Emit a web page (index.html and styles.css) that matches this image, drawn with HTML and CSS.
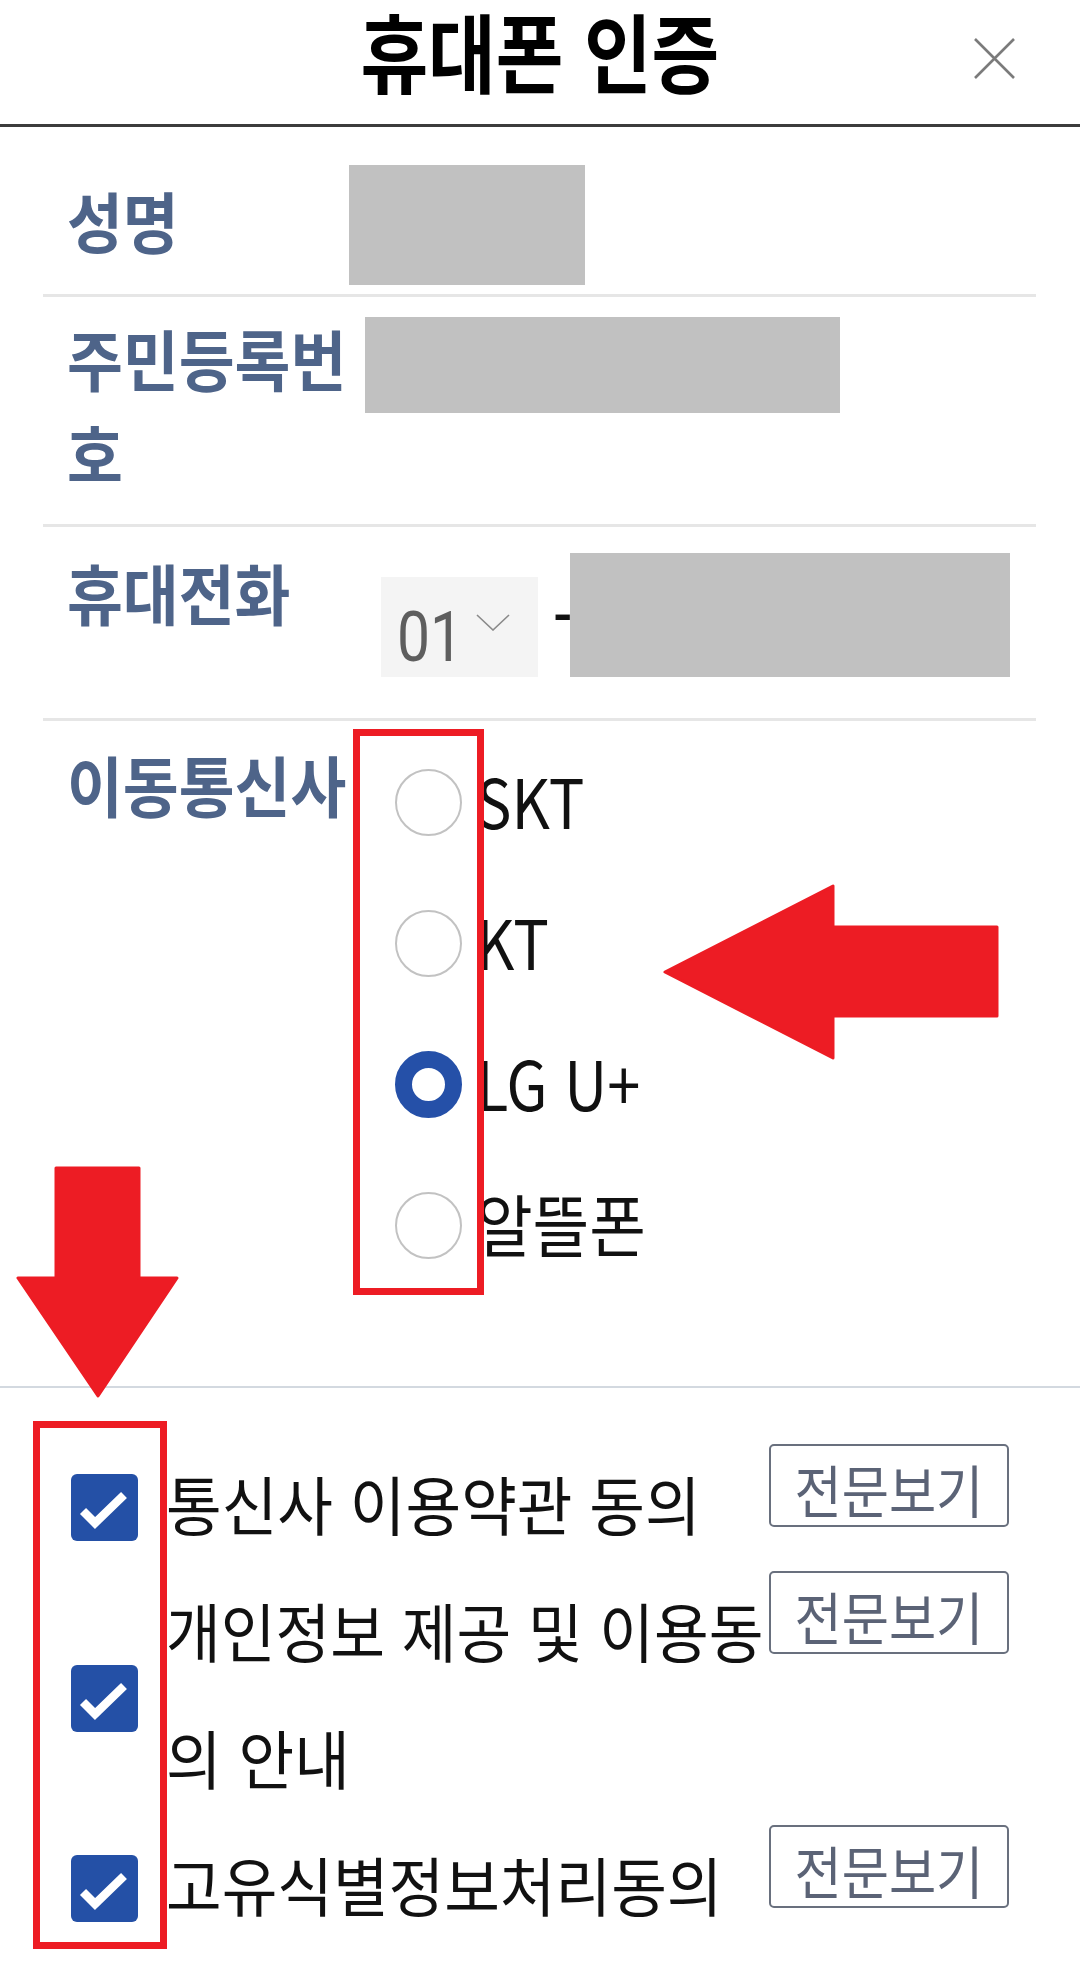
FILE: index.html
```html
<!DOCTYPE html>
<html lang="ko">
<head>
<meta charset="utf-8">
<title>휴대폰 인증</title>
<link rel="stylesheet" href="styles.css">
</head>
<body>
<div class="page">
  <header class="hdr">
    <h1 class="title"><span class="sx sx-title">휴대폰 인증</span></h1>
    <button class="close" aria-label="닫기">
      <svg viewBox="0 0 43 43" width="43" height="43"><path d="M2 2L41 41M41 2L2 41" stroke="#7b7b7b" stroke-width="2.6" fill="none"/></svg>
    </button>
  </header>

  <main class="form">
    <div class="row row-name">
      <div class="label"><span class="sx">성명</span></div>
      <div class="mask mask-name"></div>
    </div>
    <div class="row row-rrn">
      <div class="label"><span class="sx">주민등록번<br>호</span></div>
      <div class="mask mask-rrn"></div>
    </div>
    <div class="row row-phone">
      <div class="label"><span class="sx">휴대전화</span></div>
      <div class="select">
        <span class="sel-val sx sx-num">01</span>
        <svg class="chev" viewBox="0 0 34 17" width="34" height="17"><polyline points="1,1 17,16 33,1" fill="none" stroke="#8a8a8a" stroke-width="1.6"/></svg>
      </div>
      <span class="dash">-</span>
      <div class="mask mask-phone"></div>
    </div>
    <div class="row row-carrier">
      <div class="label"><span class="sx">이동통신사</span></div>
      <ul class="radios">
        <li class="radio"><span class="dot"></span><span class="rtxt sx sx-lat">SKT</span></li>
        <li class="radio"><span class="dot"></span><span class="rtxt sx sx-lat">KT</span></li>
        <li class="radio"><span class="dot dot-on"></span><span class="rtxt sx sx-lat">LG U+</span></li>
        <li class="radio"><span class="dot"></span><span class="rtxt sx sx-ko">알뜰폰</span></li>
      </ul>
    </div>
  </main>

  <section class="agree">
    <div class="item">
      <span class="cb"><svg viewBox="0 0 67 67" width="67" height="67"><polyline points="12,37 24,49 53,21" fill="none" stroke="#fff" stroke-width="8.5"/></svg></span>
      <div class="itxt"><span class="sx sx-item">통신사 이용약관 동의</span></div>
      <button class="view"><span class="sx sx-btn">전문보기</span></button>
    </div>
    <div class="item">
      <span class="cb"><svg viewBox="0 0 67 67" width="67" height="67"><polyline points="12,37 24,49 53,21" fill="none" stroke="#fff" stroke-width="8.5"/></svg></span>
      <div class="itxt"><span class="sx sx-item2">개인정보 제공 및 이용동</span><br><span class="sx sx-item">의 안내</span></div>
      <button class="view"><span class="sx sx-btn">전문보기</span></button>
    </div>
    <div class="item">
      <span class="cb"><svg viewBox="0 0 67 67" width="67" height="67"><polyline points="12,37 24,49 53,21" fill="none" stroke="#fff" stroke-width="8.5"/></svg></span>
      <div class="itxt"><span class="sx sx-item">고유식별정보처리동의</span></div>
      <button class="view"><span class="sx sx-btn">전문보기</span></button>
    </div>
  </section>
</div>

<div class="mark mark-radios"></div>
<div class="mark mark-checks"></div>
<svg class="arrow arrow-left" viewBox="0 0 340 185" width="340" height="185"><polygon points="5,92 173,6 173,47 337,47 337,136 173,136 173,178" fill="#ed1c24" stroke="#ed1c24" stroke-width="3" stroke-linejoin="round"/></svg>
<svg class="arrow arrow-down" viewBox="0 0 168 236" width="168" height="236"><polygon points="42,4 125,4 125,114 163,114 84,232 4,114 42,114" fill="#ed1c24" stroke="#ed1c24" stroke-width="3" stroke-linejoin="round"/></svg>
</body>
</html>
```

FILE: styles.css
```css
* { box-sizing: border-box; margin: 0; padding: 0; }
html, body { width: 1080px; height: 1966px; }
body {
  position: relative;
  overflow: hidden;
  background: #fff;
  color: #111;
  font-family: "Noto Sans CJK KR", "Noto Sans", sans-serif;
}

.sx {
  display: inline-block;
  white-space: nowrap;
  transform: scaleX(.92);
  transform-origin: 0 50%;
}

/* header */
.hdr {
  height: 127px;
  border-bottom: 3px solid #3c3c3c;
  display: grid;
  grid-template-columns: 1fr auto 1fr;
  align-items: start;
}
.title {
  grid-column: 2;
  font-size: 86px;
  font-weight: 700;
  line-height: 100px;
  color: #000;
}
.sx-title { transform: scaleX(.855); transform-origin: 50% 50%; }
.close {
  grid-column: 3;
  justify-self: end;
  margin: 37px 64px 0 0;
  width: 43px;
  height: 43px;
  border: 0;
  background: none;
  display: block;
}
.close svg { display: block; }

/* form rows */
.form { margin: 0 44px 0 43px; }
.row {
  display: flex;
  align-items: flex-start;
  border-bottom: 3px solid #e6e6e6;
}
.row-name { height: 170px; }
.row-rrn { height: 230px; }
.row-phone { height: 194px; }
.row-carrier { height: 665px; border-bottom: 0; }

.label {
  flex: none;
  width: 306px;
  padding-left: 24px;
  font-size: 66px;
  font-weight: 700;
  line-height: 95px;
  color: #4e6489;
}
.row-name .label { margin-top: 45px; }
.row-rrn .label { margin-top: 13px; }
.row-phone .label { margin-top: 17px; }
.row-carrier .label { margin-top: 15px; }

.mask { flex: none; background: #c1c1c1; }
.mask-name { width: 236px; height: 120px; margin-top: 38px; }
.mask-rrn { width: 475px; height: 96px; margin: 20px 0 0 16px; }
.mask-phone { width: 440px; height: 124px; margin-top: 26px; }

.select {
  flex: none;
  display: flex;
  align-items: flex-start;
  width: 157px;
  height: 100px;
  margin: 50px 0 0 32px;
  padding: 25px 0 0 16px;
  background: #f4f4f4;
}
.sel-val {
  font-family: Roboto, "Noto Sans", sans-serif;
  font-weight: 400;
  font-size: 70px;
  line-height: 70px;
  color: #5e5e5e;
}
.sx-num { transform: scaleX(.84); }
.chev { flex: none; margin: 12px 0 0 0; display: block; }

.dash {
  flex: none;
  width: 17px;
  margin: 62px 0 0 15px;
  font-size: 52px;
  font-weight: 700;
  line-height: 52px;
  color: #111;
}

/* radios */
.radios { list-style: none; margin: 11px 0 0 46px; }
.radio {
  display: flex;
  align-items: center;
  height: 141px;
}
.dot {
  flex: none;
  width: 67px;
  height: 67px;
  border-radius: 50%;
  border: 2px solid #c2c2c2;
  background: #fff;
}
.dot-on { border: 17px solid #2550a8; }
.rtxt {
  margin-left: 14px;
  font-size: 68px;
  line-height: 1;
  color: #111;
}
.sx-lat { transform: translateY(-3px) scaleX(.875); }
.sx-ko { transform: translateY(-3px) scaleX(.905); }

/* agreements */
.agree {
  border-top: 2px solid #d3d9e0;
  padding: 56px 71px 0 71px;
}
.item { display: flex; align-items: center; }
.cb {
  flex: none;
  width: 67px;
  height: 67px;
  border-radius: 6px;
  background: #2450a6;
  margin-right: 28px;
}
.cb svg { display: block; }
.itxt {
  flex: 1 1 0;
  min-width: 0;
  font-size: 64px;
  line-height: 127px;
  color: #111;
}
.sx-item { transform: translateY(-5px) scaleX(.945); }
.sx-item2 { transform: translateY(-5px) scaleX(.93); }
.view {
  flex: none;
  align-self: flex-start;
  width: 240px;
  height: 83px;
  border: 2px solid #69707e;
  border-radius: 5px;
  background: #fff;
  display: flex;
  align-items: center;
  justify-content: center;
  padding-top: 6px;
  font-family: "Noto Sans CJK KR", "Noto Sans", sans-serif;
  font-size: 57px;
  line-height: 1;
  color: #5b6376;
}
.sx-btn { transform: scaleX(.9); transform-origin: 50% 50%; }

/* annotation overlays */
.mark {
  position: absolute;
  border: 7px solid #ed1c24;
}
.mark-radios { left: 353px; top: 729px; width: 131px; height: 566px; }
.mark-checks { left: 33px; top: 1421px; width: 134px; height: 528px; }
.arrow { position: absolute; display: block; }
.arrow-left { left: 660px; top: 880px; }
.arrow-down { left: 14px; top: 1164px; }
```
